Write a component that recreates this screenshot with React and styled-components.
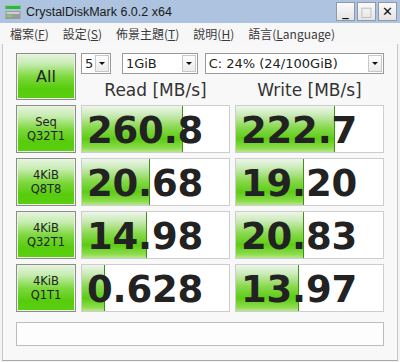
import React from "react";
import styled, { createGlobalStyle } from "styled-components";

const GlobalStyle = createGlobalStyle`
  html, body { margin: 0; padding: 0; background: #ffffff; }
  body { font-family: "DejaVu Sans", "Noto Sans CJK TC", sans-serif; }
`;

const Window = styled.div`
  width: 400px;
  height: 362px;
  display: flex;
  flex-direction: column;
  background: #f3f3f3;
  box-sizing: border-box;
  overflow: hidden;
`;

const TitleBar = styled.div`
  height: 23px;
  flex: none;
  display: flex;
  align-items: center;
  background: #adc3df;
  padding: 0 3px 0 5px;
`;

const TitleText = styled.span`
  margin-left: 5px;
  font-family: "Liberation Sans", sans-serif;
  font-size: 12.5px;
  color: #1a1a1a;
  flex: 1;
`;

const TitleButtons = styled.div`
  display: flex;
  gap: 2px;
`;

const TitleButton = styled.div`
  width: 17px;
  height: 17px;
  border: 1px solid #8f9aa8;
  background: linear-gradient(#fafafa, #e4e4e4);
  display: flex;
  align-items: center;
  justify-content: center;
  font-family: "DejaVu Sans", sans-serif;
  font-size: 13px;
  font-weight: ${(p) => (p.$bold ? 700 : 400)};
  color: ${(p) => (p.$disabled ? "#b8b8b8" : "#111")};
`;

const MenuBar = styled.div`
  height: 21px;
  flex: none;
  display: flex;
  align-items: center;
  gap: 14px;
  padding-left: 10px;
  background: #f7f7f7;
  font-family: "Noto Sans CJK TC", "DejaVu Sans", sans-serif;
  font-size: 12px;
  color: #3a3a3a;
`;

const MenuItem = styled.span`
  u { text-decoration: underline; }
`;

const Body = styled.div`
  flex: 1;
  margin: 0 2px 1px 2px;
  border-left: 1px solid #c6c6c6;
  border-right: 1px solid #c6c6c6;
  border-bottom: 1px solid #a8a8a8;
  background: #f8f8f8;
  padding: 9px 0 0 13px;
`;

const Grid = styled.div`
  display: grid;
  grid-template-columns: 60px 149px 149px;
  grid-template-rows: 21px 21px repeat(4, 48px) 29px;
  column-gap: 5px;
  row-gap: 5px;
`;

const greenButton = `
  border: 1px solid #8c8c8c;
  box-shadow: inset 0 0 0 1px #e8f6e0;
  background: linear-gradient(#e6f3df 0%, #c6ecb0 22%, #7ed83e 50%, #56cc0c 78%, #5ad010 100%);
  display: flex;
  flex-direction: column;
  align-items: center;
  justify-content: center;
  color: #222;
  font-family: "DejaVu Sans", sans-serif;
  box-sizing: border-box;
`;

const AllButton = styled.div`
  ${greenButton}
  grid-row: 1 / span 2;
  font-size: 16px;
`;

const LabelButton = styled.div`
  ${greenButton}
  font-size: 11.5px;
  line-height: 14px;
`;

const Controls = styled.div`
  grid-column: 2 / span 2;
  display: flex;
  align-items: stretch;
`;

const Combo = styled.div`
  width: ${(p) => p.$w}px;
  margin-right: ${(p) => p.$mr || 0}px;
  box-sizing: border-box;
  border: 1px solid #9a9a9a;
  background: #fff;
  display: flex;
  align-items: center;
  font-family: "DejaVu Sans", sans-serif;
  font-size: 13px;
  color: #222;
`;

const ComboText = styled.span`
  flex: 1;
  padding-left: 3px;
  white-space: nowrap;
`;

const ComboArrow = styled.div`
  width: 14px;
  height: 17px;
  margin-right: 1px;
  box-sizing: border-box;
  border: 1px solid #c8c8c8;
  background: linear-gradient(#fdfdfd, #ececec);
  display: flex;
  align-items: center;
  justify-content: center;
  &::after {
    content: "";
    border-left: 3px solid transparent;
    border-right: 3px solid transparent;
    border-top: 3px solid #111;
  }
`;

const Header = styled.div`
  display: flex;
  align-items: center;
  justify-content: center;
  font-family: "DejaVu Sans", sans-serif;
  font-size: 17px;
  color: #333;
`;

const ValueBox = styled.div`
  box-sizing: border-box;
  border: 1px solid #cdcdcd;
  background-color: #ffffff;
  background-image:
    linear-gradient(to right, transparent calc(100% - 1px), #3f8f1a calc(100% - 1px)),
    linear-gradient(#eef6ea 0%, #cdebbc 18%, #86d84a 48%, #5ccc14 72%, #8ddc4c 92%, #b6e890 100%);
  background-repeat: no-repeat;
  background-position: 0 0;
  display: flex;
  align-items: center;
  padding-left: 5px;
  padding-top: 2px;
  font-family: "DejaVu Sans", sans-serif;
  font-weight: 700;
  font-size: 37px;
  line-height: 1;
  color: #222;
  letter-spacing: -0.2px;
`;

const StatusBar = styled.div`
  grid-column: 1 / span 3;
  margin-top: 5px;
  box-sizing: border-box;
  border: 1px solid #bdbdbd;
  background: #fdfdfd;
`;

const DriveIcon = () => (
  <svg width="16" height="16" viewBox="0 0 16 16">
    <rect x="0.5" y="1" width="15" height="4" fill="#2fb83a" />
    <rect x="0.5" y="1" width="15" height="1" fill="#7fe07a" />
    <rect x="0.5" y="7" width="15" height="8" fill="#9a9a9a" />
    <rect x="1.5" y="8" width="13" height="2" fill="#d0d0d0" />
    <rect x="2" y="11" width="5" height="2" fill="#6edc5a" />
  </svg>
);

const rows = [
  { l1: "Seq", l2: "Q32T1", read: "260.8", rw: 101, write: "222.7", ww: 99 },
  { l1: "4KiB", l2: "Q8T8", read: "20.68", rw: 68, write: "19.20", ww: 68 },
  { l1: "4KiB", l2: "Q32T1", read: "14.98", rw: 65, write: "20.83", ww: 68 },
  { l1: "4KiB", l2: "Q1T1", read: "0.628", rw: 23, write: "13.97", ww: 63 },
];

const menus = [
  ["檔案(", "F", ")"],
  ["設定(", "S", ")"],
  ["佈景主題(", "T", ")"],
  ["說明(", "H", ")"],
  ["語言(", "L", "anguage)"],
];

export default function App() {
  return (
    <>
      <GlobalStyle />
      <Window>
        <TitleBar>
          <DriveIcon />
          <TitleText>CrystalDiskMark 6.0.2 x64</TitleText>
          <TitleButtons>
            <TitleButton $bold>_</TitleButton>
            <TitleButton $disabled>□</TitleButton>
            <TitleButton $bold>✕</TitleButton>
          </TitleButtons>
        </TitleBar>
        <MenuBar>
          {menus.map(([a, b, c]) => (
            <MenuItem key={a}>
              {a}
              <u>{b}</u>
              {c}
            </MenuItem>
          ))}
        </MenuBar>
        <Body>
          <Grid>
            <AllButton>All</AllButton>
            <Controls>
              <Combo $w={30} $mr={11}>
                <ComboText>5</ComboText>
                <ComboArrow />
              </Combo>
              <Combo $w={76} $mr={7}>
                <ComboText>1GiB</ComboText>
                <ComboArrow />
              </Combo>
              <Combo $w={180}>
                <ComboText>C: 24% (24/100GiB)</ComboText>
                <ComboArrow />
              </Combo>
            </Controls>
            <Header>Read [MB/s]</Header>
            <Header>Write [MB/s]</Header>
            {rows.map((r, i) => (
              <React.Fragment key={i}>
                <LabelButton>
                  <span>{r.l1}</span>
                  <span>{r.l2}</span>
                </LabelButton>
                <ValueBox style={{ backgroundSize: `${r.rw}px 100%, ${r.rw}px 100%` }}>
                  {r.read}
                </ValueBox>
                <ValueBox style={{ backgroundSize: `${r.ww}px 100%, ${r.ww}px 100%` }}>
                  {r.write}
                </ValueBox>
              </React.Fragment>
            ))}
            <StatusBar />
          </Grid>
        </Body>
      </Window>
    </>
  );
}
